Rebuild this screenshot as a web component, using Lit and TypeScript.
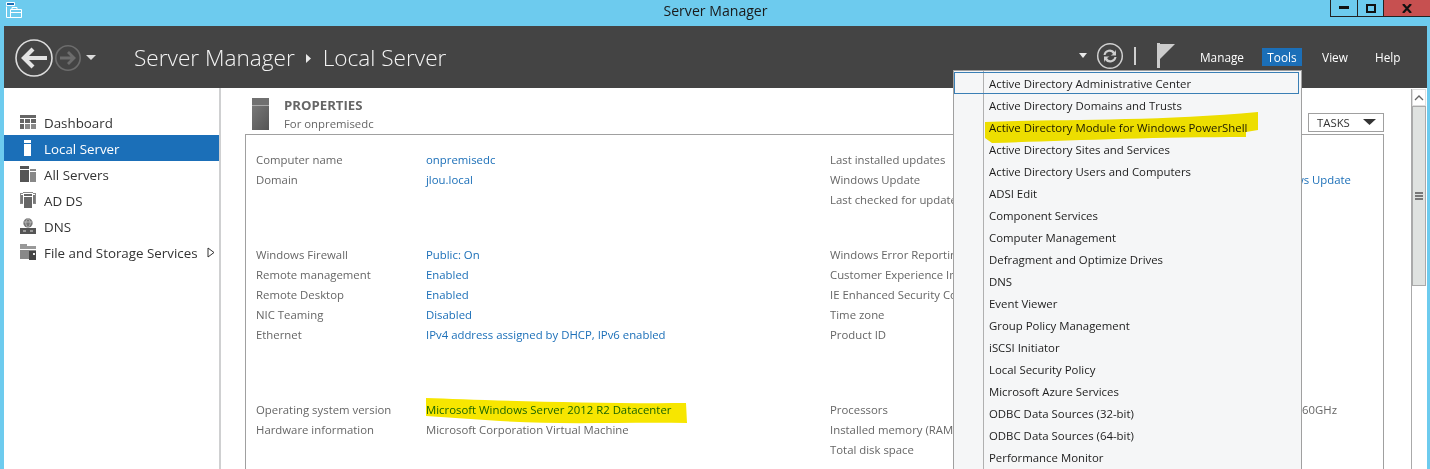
import { LitElement, html, css, svg } from "lit";
import { customElement } from "lit/decorators.js";

const menuItems = [
  "Active Directory Administrative Center","Active Directory Domains and Trusts","Active Directory Module for Windows PowerShell",
  "Active Directory Sites and Services","Active Directory Users and Computers","ADSI Edit","Component Services","Computer Management",
  "Defragment and Optimize Drives","DNS","Event Viewer","Group Policy Management","iSCSI Initiator","Local Security Policy",
  "Microsoft Azure Services","ODBC Data Sources (32-bit)","ODBC Data Sources (64-bit)","Performance Monitor",
];

type Row = [string, string, string, string?, string?];
const groups: { cls: string; rows: Row[] }[] = [
  { cls: "g1", rows: [
    ["Computer name","onpremisedc","Last installed updates"],
    ["Domain","jlou.local","Windows Update","Download updates only, using Windows Update"],
    ["","","Last checked for updates"],
  ]},
  { cls: "g2", rows: [
    ["Windows Firewall","Public: On","Windows Error Reporting"],
    ["Remote management","Enabled","Customer Experience Improvement Program"],
    ["Remote Desktop","Enabled","IE Enhanced Security Configuration"],
    ["NIC Teaming","Disabled","Time zone"],
    ["Ethernet","IPv4 address assigned by DHCP, IPv6 enabled","Product ID"],
  ]},
  { cls: "g3", rows: [
    ["Operating system version","Microsoft Windows Server 2012 R2 Datacenter","Processors","Intel(R) Xeon(R) CPU E5-2673 v3 @ 2.60GHz","plain short"],
    ["Hardware information","Microsoft Corporation Virtual Machine","Installed memory (RAM)"],
    ["","","Total disk space"],
  ]},
];

const ic = {
  dash: svg`<svg width="16" height="14" viewBox="0 0 16 14"><path fill="#666" d="M0 0h16v3H0zM0 4h4v4H0zM5 4h5v4H5zM11 4h5v4h-5zM0 9h4v5H0z"/><path fill="#8a8a8a" d="M5 9h5v5H5zM11 9h5v5h-5z"/></svg>`,
  local: svg`<svg width="16" height="16" viewBox="0 0 16 16"><path fill="#fff" d="M4 0h7v3H4zM4 4h7v12H4z"/></svg>`,
  all: svg`<svg width="16" height="16" viewBox="0 0 16 16"><path fill="#555" d="M0 0h9v3H0zM0 4h9v12H0z"/><path fill="#888" d="M10 3h6v2h-6zM10 6h6v10h-6z"/></svg>`,
  adds: svg`<svg width="16" height="16" viewBox="0 0 16 16"><path fill="#888" d="M0 1h3v1H1v9h2v1H0zM13 1h3v11h-3v-1h2V2h-2zM3 0h10v1H3z"/><path fill="#666" d="M4 2h8v2H4zM4 5h8v11H4z"/><path fill="#777" d="M1 3h2v8H1zM13 3h2v8h-2z"/></svg>`,
  dns: svg`<svg width="16" height="16" viewBox="0 0 16 16"><circle cx="8" cy="5" r="4.7" fill="#777"/><path fill="none" stroke="#ccc" stroke-width=".7" d="M3.500 4h9M8 .5c-3 3-3 6 0 9M8 .5c3 3 3 6 0 9"/><path fill="#555" d="M0 10h16v6H0z"/><path fill="#ddd" d="M3 12.500h3v1H3zM10 12.500h3v1h-3z"/></svg>`,
  file: svg`<svg width="16" height="16" viewBox="0 0 16 16"><path fill="#999" d="M0 0h7v2h9v3H0z"/><path fill="#888" d="M0 6h16v9H0z"/><path fill="#444" d="M9 7h7v9H9z"/><path fill="#eee" d="M13 9h2v2h-2z"/></svg>`,
};

const side: [string, unknown][] = [
  ["Dashboard", ic.dash],["Local Server", ic.local],["All Servers", ic.all],["AD DS", ic.adds],["DNS", ic.dns],["File and Storage Services", ic.file],
];

@customElement("app-root")
export class AppRoot extends LitElement {
  static styles = css`
    :host { display: block; position: relative; width: 1430px; height: 469px; overflow: hidden; background: #6dcbee;
      font-family: "Open Sans", "Noto Sans", sans-serif; font-size: 11.37px; color: #222; }
    .titlebar { height: 26px; display: grid; grid-template-columns: 1fr auto 1fr; align-items: start; }
    .appicon { margin: 2px 0 0 6px; display: block; }
    .wintitle { font-size: 14.1px; line-height: 21px; color: #1a1a1a; margin-left: 1px; }
    .winbtns { justify-self: end; display: flex; height: 17px; border-left: 1px solid #222; border-bottom: 1px solid #222; box-sizing: border-box; }
    .wb { width: 27px; border-right: 1px solid #222; display: flex; align-items: center; justify-content: center; box-sizing: border-box; }
    .wb.max { width: 26px; }
    .wb.close { width: 46px; border: 0; background: #c75050; }
    .window { margin: 0 3px 0 4px; }
    .hdr { height: 62px; background: #444; color: #fff; display: flex; align-items: center; box-sizing: border-box; padding-top: 2px; }
    .nav { display: flex; align-items: center; margin-left: 11px; width: 119px; flex: none; }
    .crumb { display: flex; align-items: center; font-size: 22.6px; font-weight: 300; line-height: 30px; color: #f4f4f4; margin-top: 0; }
    .sep { margin: 0 11px 0 10px; display: block; }
    .hright { margin-left: auto; display: flex; align-items: center; height: 24px; margin-top: -4px; }
    .mi { font-size: 11.8px; line-height: 18px; color: #fff; text-align: center; margin-top: 2px; }
    .m1 { margin-left: 26px; width: 43px; }
    .m2 { margin-left: 19px; width: 40px; background: #1b6fb8; }
    .m3 { margin-left: 20px; width: 26px; }
    .m4 { margin-left: 27px; width: 25px; margin-right: 27px; }
    .body { display: flex; height: 381px; background: #fff; }
    .sidebar { width: 215px; flex: none; border-right: 2px solid #cfd0d1; padding-top: 21px; box-sizing: content-box; }
    .si { height: 26px; display: flex; align-items: center; font-size: 13.35px; color: #333; position: relative; }
    .si span { position: relative; top: 1px; }
    .si.on { background: #1b6fb8; color: #fff; }
    .si svg { margin-left: 16px; margin-right: 8px; flex: none; display: block; }
    .si .arr { position: absolute; left: 203px; margin: 0; }
    .main { flex: 1; min-width: 0; overflow: hidden; }
    .phead { height: 46px; display: flex; padding-left: 31px; box-sizing: border-box; padding-top: 8px; position: relative; }
    .picon { flex: none; margin-right: 15px; display: block; margin-top: 2px; }
    .ptxt { color: #666; line-height: 19px; }
    .ptxt b { display: block; font-size: 13.2px; font-weight: 700; color: #666; line-height: 18px; }
    .tasks { margin: 17px 43px 0 auto; width: 76px; height: 19px; border: 1px solid #a0a0a0; box-sizing: border-box; display: flex; align-items: center; padding-left: 8px; color: #333; gap: 13px; }
    .content { display: flex; }
    .panel { margin-left: 24px; width: 1139px; height: 360px; border: 1px solid #a0a0a0; box-sizing: border-box; padding: 14px 0 0 10px; flex: none; }
    .grp { display: grid; grid-template-columns: 170px 404px 123px 1fr; grid-auto-rows: 20px; align-items: center; color: #666; white-space: nowrap; }
    .g2 { margin-top: 35px; }
    .g3 { margin-top: 55px; }
    .clip { overflow: hidden; }
    .v { color: #1b6fb8; }
    .v.plain { color: #666; }
    .rv { margin-left: 349px; width: 49px; display: flex; justify-content: flex-end; overflow: hidden; color: #1b6fb8; }
    .rv span { flex: none; }
    .rv.plain { color: #666; }
    .rv.short { width: 35px; }
    .scroll { position: absolute; left: 1411px; top: 89px; width: 16px; height: 380px; background: #fff; border-left: 1px solid #aaa; border-right: 1px solid #fff; box-sizing: border-box; display: flex; flex-direction: column; }
    .up { height: 17px; flex: none; display: flex; align-items: center; justify-content: center; border: 1px solid #ddd; box-sizing: border-box; }
    .thumb { height: 180px; flex: none; background: #dfe2e0; border: 1px solid #aaa; box-sizing: border-box; display: flex; align-items: center; justify-content: center; }
    .menu { position: absolute; left: 953px; top: 70px; width: 349px; height: 399px; background: #f5f6f7; border: 1px solid #a0a0a0; border-bottom: 0; box-sizing: border-box; padding: 1px 2px 0 0; z-index: 2; color: #1c1c1c; font-size: 11.4px; }
    .menu::before { content: ""; position: absolute; left: 29px; top: 0; bottom: 0; width: 1px; background: #b0b0b0; }
    .mitem { height: 22px; line-height: 22px; padding-left: 34px; box-sizing: border-box; border: 1px solid transparent; white-space: nowrap; position: relative; }
    .mitem.hot { border-color: #3a7fb5; background: transparent; }
    .ink { position: absolute; left: 0; top: 0; z-index: 3; mix-blend-mode: multiply; pointer-events: none; display: block; }
  `;

  render() {
    return html`
      <div class="titlebar">
        <svg class="appicon" width="17" height="16" viewBox="0 0 17 16">
          <path fill="none" stroke="#fff" stroke-width="1" d="M.5.5h8v3h-8zM.5 4.500v11h15v-8h-11v8"/>
          <path fill="#1b6fb8" d="M1 1h7v2H1z"/><path fill="none" stroke="#fff" d="M6 7V5.500h5V7M5 10.500h10"/>
        </svg>
        <div class="wintitle">Server Manager</div>
        <div class="winbtns">
          <div class="wb"><svg width="10" height="4" viewBox="0 0 10 4"><path d="M0 0h10v3H0z" fill="#111"/></svg></div>
          <div class="wb max"><svg width="10" height="9" viewBox="0 0 10 9"><path d="M1 1h8v7H1z" fill="none" stroke="#111" stroke-width="2"/></svg></div>
          <div class="wb close"><svg width="10" height="9" viewBox="0 0 10 9"><path d="M1 0l8 9M9 0L1 9" stroke="#111" stroke-width="2.200" fill="none"/></svg></div>
        </div>
      </div>
      <div class="window">
        <div class="hdr">
          <div class="nav">
            <svg width="84" height="40" viewBox="0 0 84 40">
              <circle cx="19" cy="20" r="18" fill="none" stroke="#dcdcdc" stroke-width="1.600"/>
              <path d="M32 20H10M18 11l-9 9 9 9" fill="none" stroke="#e4e4e4" stroke-width="4.200"/>
              <circle cx="53" cy="20" r="12.200" fill="none" stroke="#6c6c6c" stroke-width="1.600"/>
              <path d="M45 20h14M53 14l6 6-6 6" fill="none" stroke="#6c6c6c" stroke-width="2.800"/>
              <path d="M71 17h10l-5 5z" fill="#dcdcdc"/>
            </svg>
          </div>
          <div class="crumb">Server Manager
            <svg class="sep" width="7" height="9" viewBox="0 0 7 9"><path d="M1 0l5 4.500-5 4.500z" fill="#e8e8e8"/></svg>
            Local Server</div>
          <div class="hright">
            <svg width="12" height="6" viewBox="0 0 12 6"><path d="M0 0h8l-4 5z" fill="#e8e8e8"/></svg>
            <svg style="margin-left:5px" width="28" height="28" viewBox="0 0 28 28">
              <circle cx="14" cy="14" r="12.300" fill="none" stroke="#cfcfcf" stroke-width="1.500"/>
              <path d="M7.500 13a6.500 6.500 0 0 1 11.500-3l1-2.500v6h-5.500l2.500-1.500a4 4 0 0 0-7.500 1zM20.500 15a6.500 6.500 0 0 1-11.500 3l-1 2.500v-6h5.500L11 16a4 4 0 0 0 7.500-1z" fill="#cfcfcf"/>
            </svg>
            <svg style="margin-left:10px" width="3" height="18" viewBox="0 0 3 18"><path d="M0 0h2v18H0z" fill="#cfcfcf"/></svg>
            <svg style="margin-left:20px;margin-right:-1px;margin-top:-2px" width="18" height="25" viewBox="0 0 18 25"><path d="M0 0h3v25H0z" fill="#ccc"/><path d="M3 1h15L3 16z" fill="#ccc"/></svg>
            <div class="mi m1">Manage</div><div class="mi m2">Tools</div><div class="mi m3">View</div><div class="mi m4">Help</div>
          </div>
        </div>
        <div class="body">
          <div class="sidebar">
            ${side.map(([t, i], n) => html`<div class="si ${n === 1 ? "on" : ""}">${i}<span>${t}</span>
              ${n === 5 ? html`<svg class="arr" width="8" height="11" viewBox="0 0 8 11"><path d="M1 1l6 4.500L1 10z" fill="#fff" stroke="#333"/></svg>` : ""}</div>`)}
          </div>
          <div class="main">
            <div class="phead">
              <svg class="picon" width="17" height="32" viewBox="0 0 17 32">
                <defs><linearGradient id="pg" x1="0" y1="0" x2="1" y2="1"><stop offset="0" stop-color="#777"/><stop offset="1" stop-color="#555"/></linearGradient></defs>
                <path fill="#707070" d="M0 0h17v7H0z"/><path fill="#aaa" d="M0 7h17v1H0z"/><path fill="url(#pg)" d="M0 8h17v24H0z"/>
              </svg>
              <div class="ptxt"><b>PROPERTIES</b>For onpremisedc</div>
              <div class="tasks">TASKS <svg width="14" height="7" viewBox="0 0 14 7"><path d="M0 0h13l-6.500 6z" fill="#333"/></svg></div>
            </div>
            <div class="content">
              <div class="panel">
                ${groups.map((g) => html`<div class="grp ${g.cls}">
                  ${g.rows.map((r) => html`<div>${r[0]}</div><div class="v ${r[0] === "Hardware information" ? "plain" : ""}">${r[1]}</div><div class="clip">${r[2]}</div>${r[3] ? html`<div class="rv ${r[4] ?? ""}"><span>${r[3]}</span></div>` : html`<div></div>`}`)}
                </div>`)}
              </div>
            </div>
          </div>
        </div>
      </div>
      <div class="scroll">
        <div class="up"><svg width="10" height="6" viewBox="0 0 10 6"><path d="M1 5l4-4 4 4" fill="none" stroke="#666" stroke-width="1.300"/></svg></div>
        <div class="thumb"><svg width="8" height="8" viewBox="0 0 8 8"><path d="M0 0h8v2H0zM0 3h8v2H0zM0 6h8v2H0z" fill="#777"/></svg></div>
      </div>
      <div class="menu">
        ${menuItems.map((m, i) => html`<div class="mitem ${i === 0 ? "hot" : ""}">${m}</div>`)}
      </div>
      <svg class="ink" width="1430" height="469" viewBox="0 0 1430 469">
        <path fill="#f7e600" d="M985 122C1040 119 1150 122 1258 112V130L1246 132V137C1150 137 1060 141 992 143L985 138Z"/>
        <path fill="#f7e600" d="M426 398C480 400 600 404 686 403L687 423C620 422 560 425 500 421L426 416Z"/>
      </svg>
    `;
  }
}
